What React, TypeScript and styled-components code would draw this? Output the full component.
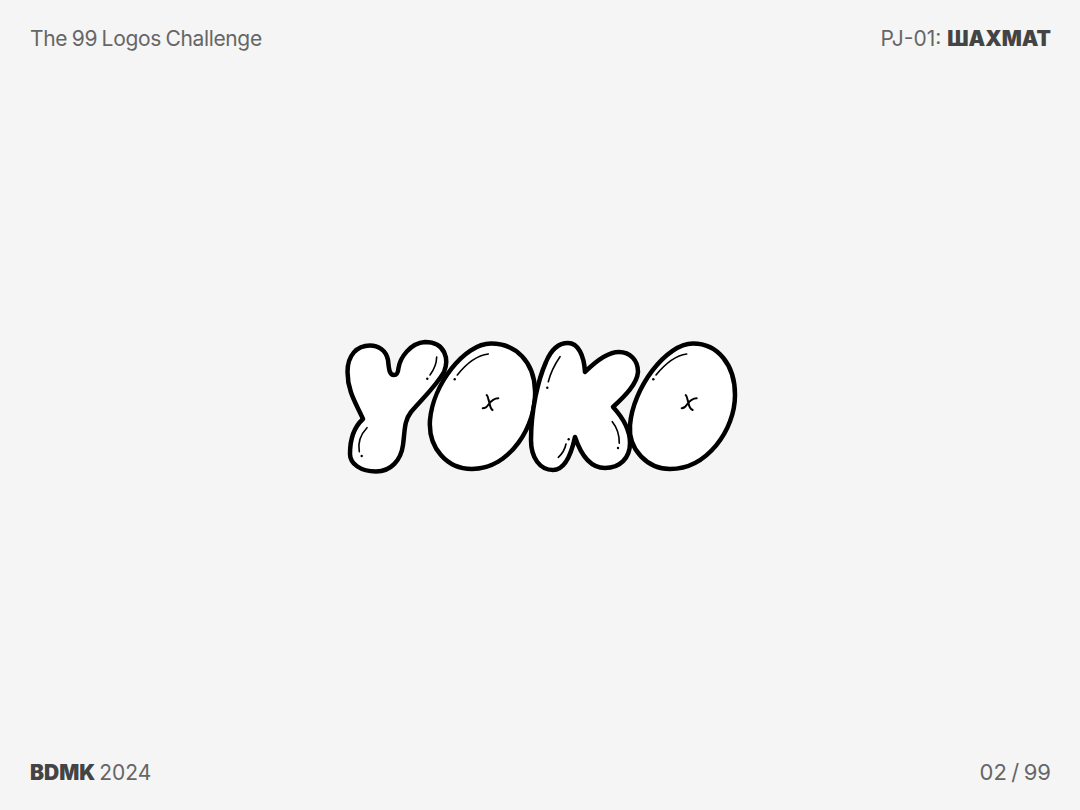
import { createGlobalStyle } from "styled-components";
import styled from "styled-components";

const GlobalStyle = createGlobalStyle`
  html, body {
    margin: 0;
    padding: 0;
    background: #f5f5f5;
  }
`;

function YokoLogo() {
  return (
    <LogoSvg viewBox="335 330 410 150" aria-label="YOKO">
      <Shape d="M394 375C389.500 375 389 370 388 360C386 350 378 345.500 370 345.500C357 345.500 347.500 355 347.500 372C347.500 392 357 405 363 419C353 428 350 440 350 454C350 464 361 471.500 376 471.500C391 471.500 401 460 403 445C405 430 404 421 411 412C424 397 436 386 444 372C449 360 446 342 425 342C410 343 400 358 398.500 368C398 373 397 375 394 375Z" />
      <Shape d="M491 343.500C464 343.500 433 385 430 420C428 448 447 469 472 469C510 469 537 425 535 390C534 362 516 343.500 491 343.500Z" />
      <Shape d="M568 343C558 343 551 350 546 362C538 380 531 410 531 440C531 458 540 470 553 470C563 470 570 460 575 437C581 455 590 468 605 468C620 468 630 458 630 443C630 432 625 420 613 407C625 396 637 384 638 372C638 360 630 352 619 352C607 352 595 362 585 372C584 355 578 343 568 343Z" />
      <Shape d="M693 343.500C666 343.500 633 388 630 425C628 450 648 469 670 469C707 469 735 430 735 395C735 365 718 343.500 693 343.500Z" />
      <Shine d="M436.700 357C436.500 364 433 371 430 375M367 427.700C361 434 357.500 442 359.300 451.700" />
      <Shine d="M488.300 354C476 355.500 466 364 457.300 375M560 356.700C555 364 550.500 373 548.300 381.700" />
      <Shine d="M566 444C565 449 562 454 558.300 457.300M612.300 421.700C616.500 427 619.500 435 619.300 443.300M686.700 354C675 355.500 665 364 656 375" />
      <Cross d="M486.700 395C488 396 488.500 400 489.500 403C490 406 490.500 409 492.500 410M498.300 398.300C494 398.300 491 401 488.500 404.500C487 407 485 408.300 482.700 408.300" />
      <Cross d="M685.700 395C687 396 687.500 400 688.500 403C689 406 690 409 692.700 410M696.700 398.300C692 398.300 689.500 401 687 404.500C685.500 407 684 408.300 681.700 408.300" />
      <Dot cx="427.300" cy="378.700" r="1.200" />
      <Dot cx="361.700" cy="456" r="1.200" />
      <Dot cx="454.700" cy="379.300" r="1.200" />
      <Dot cx="547.300" cy="387.700" r="1.200" />
      <Dot cx="568.700" cy="439.300" r="1.200" />
      <Dot cx="618" cy="448" r="1.200" />
      <Dot cx="653.300" cy="379.300" r="1.200" />
    </LogoSvg>
  );
}

export default function App() {
  return (
    <Page>
      <GlobalStyle />
      <Bar $edge="top">
        <Title>The 99 Logos Challenge</Title>
        <Caption>
          PJ-01: <Strong>ШАХМАТ</Strong>
        </Caption>
      </Bar>
      <Stage>
        <YokoLogo />
      </Stage>
      <Bar $edge="bottom">
        <Caption $wordGap={-2}>
          <Strong>BDMK</Strong> 2024
        </Caption>
        <Counter>02 / 99</Counter>
      </Bar>
    </Page>
  );
}

const Page = styled.div`
  width: 1080px;
  height: 810px;
  display: flex;
  flex-direction: column;
  background: #f5f5f5;
  font-family: Inter, "Noto Sans", sans-serif;
  overflow: hidden;
`;

const Bar = styled.div<{ $edge: "top" | "bottom" }>`
  display: flex;
  justify-content: space-between;
  align-items: center;
  box-sizing: border-box;
  height: 78px;
  padding: ${(p) => (p.$edge === "top" ? "0 29px 2px 30px" : "2px 29px 0 30px")};
`;

const Caption = styled.span<{ $wordGap?: number }>`
  font-size: 21px;
  color: #666;
  word-spacing: ${(p) => p.$wordGap ?? 0}px;
`;

const Title = styled.span`
  font-size: 21px;
  color: #666;
  letter-spacing: -0.35px;
  word-spacing: -1px;
`;

const Counter = styled.span`
  font-size: 22px;
  color: #666;
  word-spacing: -1.700px;
`;

const Strong = styled.strong`
  font-weight: 900;
  color: #444;
`;

const Stage = styled.div`
  flex: 1;
  display: flex;
  align-items: center;
  justify-content: center;
`;

const LogoSvg = styled.svg`
  display: block;
  width: 410px;
  height: 150px;
`;

const Shape = styled.path`
  fill: #fff;
  stroke: #000;
  stroke-width: 4.500;
  stroke-linejoin: round;
`;

const Shine = styled.path`
  fill: none;
  stroke: #000;
  stroke-width: 1.600;
  stroke-linecap: round;
`;

const Cross = styled.path`
  fill: none;
  stroke: #000;
  stroke-width: 2;
  stroke-linecap: round;
`;

const Dot = styled.circle`
  fill: #000;
`;
